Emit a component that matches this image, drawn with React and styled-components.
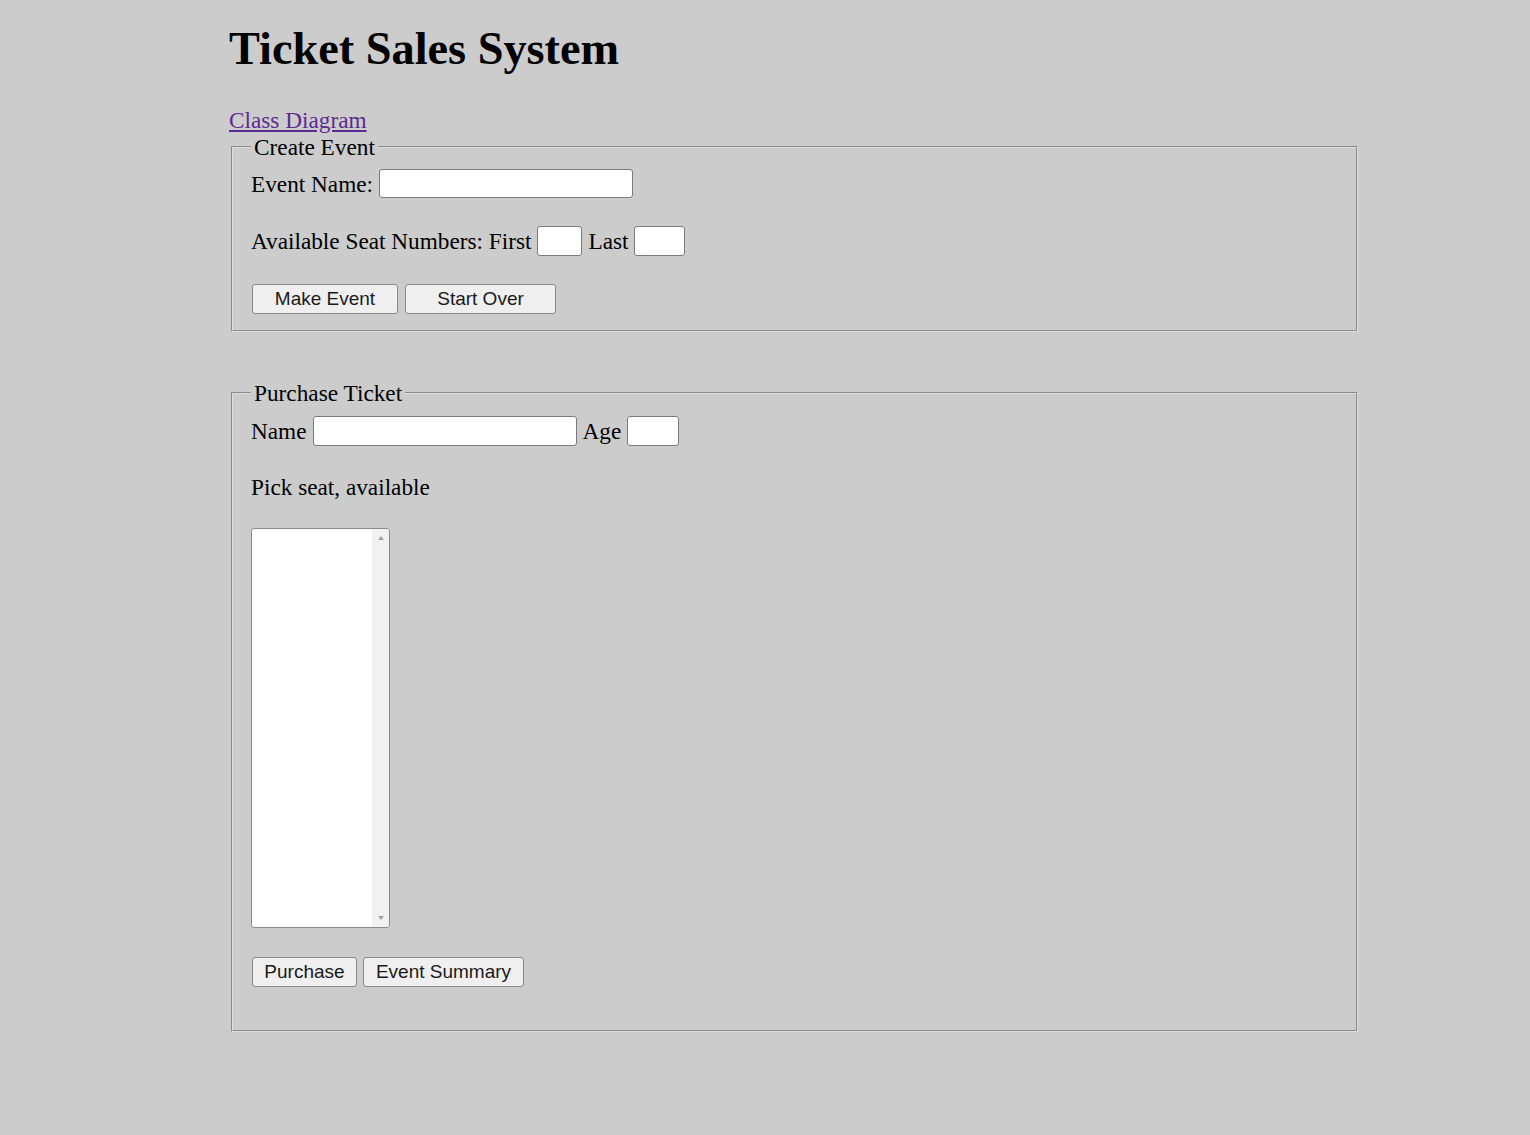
import React from "react";
import styled, { createGlobalStyle } from "styled-components";

const GlobalStyle = createGlobalStyle`
  html, body {
    margin: 0;
    padding: 0;
    background: #cccccc;
  }
  body {
    font-family: "Liberation Serif", "Times New Roman", serif;
    font-size: 23.25px;
    color: #000;
  }
  * { box-sizing: border-box; }
`;

const Page = styled.main`
  padding-left: 229px;
  padding-bottom: 100px;
  width: 1360px;
  box-sizing: border-box;
`;

const Title = styled.h1`
  margin: 22px 0 31px;
  font-size: 46.3px;
  line-height: 53px;
  font-weight: bold;
`;

const LinkLine = styled.div`
  line-height: 28px;
  height: 28px;
`;

const DiagramLink = styled.a`
  color: #5b2a92;
  text-decoration: underline;
`;

const Fieldset = styled.fieldset`
  margin: ${(p) => p.$mt || 0}px 2px 0;
  padding: 0 18px ${(p) => p.$pb}px;
  border: 2px groove #dedede;
  min-width: 0;
`;

const Legend = styled.legend`
  padding: 0 3px;
  line-height: 26px;
  font-size: 23.3px;
`;

const FieldRow = styled.div`
  display: flex;
  align-items: center;
  gap: 6px;
  height: ${(p) => p.$h || 30}px;
  margin-top: ${(p) => p.$mt}px;
  line-height: 26px;
`;

const Label = styled.span`
  white-space: nowrap;
`;

const TextInput = styled.input`
  width: ${(p) => p.$w}px;
  height: ${(p) => p.$h || 30}px;
  margin: 0;
  padding: 1px 3px;
  border: 1px solid #7a7a7a;
  border-radius: 3px;
  background: #fff;
  font-family: "Liberation Sans", Arial, sans-serif;
  font-size: 19px;
  flex: none;
`;

const Paragraph = styled.p`
  margin: ${(p) => p.$mt}px 0 0;
  line-height: 27px;
`;

const ListBox = styled.div`
  display: flex;
  width: 139px;
  height: 400px;
  margin-top: 27px;
  border: 1px solid #8a8a8a;
  border-radius: 3px;
  background: #fff;
  overflow: hidden;
`;

const ListArea = styled.div`
  flex: 1;
`;

const ScrollTrack = styled.div`
  width: 17px;
  background: #f1f1f1;
  display: flex;
  flex-direction: column;
  justify-content: space-between;
  align-items: center;
  padding: 7px 0 7px;
`;

const Arrow = styled.span`
  width: 0;
  height: 0;
  border-left: 3.5px solid transparent;
  border-right: 3.5px solid transparent;
  ${(p) =>
    p.$dir === "up"
      ? "border-bottom: 4px solid #a3a3a3;"
      : "border-top: 4px solid #a3a3a3;"}
`;

const ButtonRow = styled.div`
  display: flex;
  gap: ${(p) => p.$gap || 7}px;
  margin-top: ${(p) => p.$mt}px;
  padding-left: 1px;
`;

const Button = styled.button`
  width: ${(p) => p.$w}px;
  height: 30px;
  margin: 0;
  padding: 0;
  background: #efefef;
  border: 1px solid #8a8a8a;
  border-radius: 3px;
  font-family: "Liberation Sans", Arial, sans-serif;
  font-size: 19px;
  color: #1a1a1a;
  cursor: pointer;
`;

export default function App() {
  return (
    <>
      <GlobalStyle />
      <Page>
        <Title>Ticket Sales System</Title>
        <LinkLine>
          <DiagramLink href="#">Class Diagram</DiagramLink>
        </LinkLine>

        <Fieldset $pb={16}>
          <Legend>Create Event</Legend>
          <FieldRow $mt={9} $h={29}>
            <Label>Event Name:</Label>
            <TextInput type="text" $w={254} $h={29} />
          </FieldRow>
          <FieldRow $mt={28}>
            <Label>Available Seat Numbers: First</Label>
            <TextInput type="text" $w={45} />
            <Label>Last</Label>
            <TextInput type="text" $w={51} />
          </FieldRow>
          <ButtonRow $mt={28} $gap={7}>
            <Button $w={146}>Make Event</Button>
            <Button $w={151}>Start Over</Button>
          </ButtonRow>
        </Fieldset>

        <Fieldset $mt={48} $pb={43}>
          <Legend>Purchase Ticket</Legend>
          <FieldRow $mt={10}>
            <Label>Name</Label>
            <TextInput type="text" $w={264} />
            <Label>Age</Label>
            <TextInput type="text" $w={52} />
          </FieldRow>
          <Paragraph $mt={28}>Pick seat, available</Paragraph>
          <ListBox role="listbox">
            <ListArea />
            <ScrollTrack>
              <Arrow $dir="up" />
              <Arrow $dir="down" />
            </ScrollTrack>
          </ListBox>
          <ButtonRow $mt={29} $gap={6}>
            <Button $w={105}>Purchase</Button>
            <Button $w={161}>Event Summary</Button>
          </ButtonRow>
        </Fieldset>
      </Page>
    </>
  );
}
